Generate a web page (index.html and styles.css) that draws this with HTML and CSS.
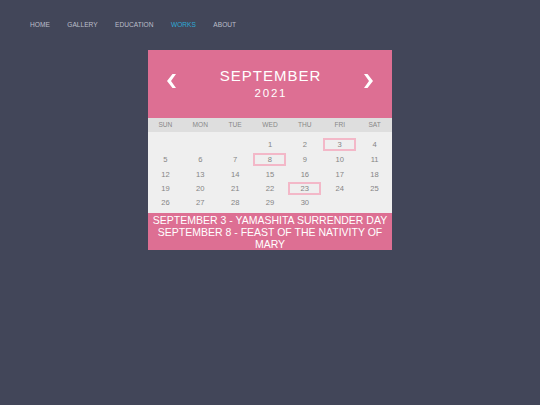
FILE: index.html
```html
<!DOCTYPE html>
<html>
<head>
<meta charset="utf-8">
<link rel="stylesheet" href="styles.css">
</head>
<body>
<nav class="nav">
  <a class="nav-link">HOME</a>
  <a class="nav-link">GALLERY</a>
  <a class="nav-link">EDUCATION</a>
  <a class="nav-link active">WORKS</a>
  <a class="nav-link">ABOUT</a>
</nav>
<div class="calendar">
  <div class="cal-head">
    <svg class="arrow" width="9" height="14" viewBox="0 0 9 14"><polygon points="5.5,0 9,0 4,7 9,14 5.5,14 0,7" fill="#fff"/></svg>
    <div class="title">
      <div class="month">SEPTEMBER</div>
      <div class="year">2021</div>
    </div>
    <svg class="arrow" width="9" height="14" viewBox="0 0 9 14"><polygon points="3.5,0 0,0 5,7 0,14 3.5,14 9,7" fill="#fff"/></svg>
  </div>
  <div class="weekdays">
    <span>SUN</span><span>MON</span><span>TUE</span><span>WED</span><span>THU</span><span>FRI</span><span>SAT</span>
  </div>
  <div class="days">
    <span></span><span></span><span></span><span>1</span><span>2</span><span class="event">3</span><span>4</span>
    <span>5</span><span>6</span><span>7</span><span class="event">8</span><span>9</span><span>10</span><span>11</span>
    <span>12</span><span>13</span><span>14</span><span>15</span><span>16</span><span>17</span><span>18</span>
    <span>19</span><span>20</span><span>21</span><span>22</span><span class="event">23</span><span>24</span><span>25</span>
    <span>26</span><span>27</span><span>28</span><span>29</span><span>30</span><span></span><span></span>
  </div>
  <div class="events">
    <div>SEPTEMBER 3 - YAMASHITA SURRENDER DAY</div>
    <div>SEPTEMBER 8 - FEAST OF THE NATIVITY OF MARY</div>
  </div>
</div>
</body>
</html>
```
FILE: styles.css
```css
html, body {
  margin: 0;
  padding: 0;
  background: #424659;
  font-family: "Liberation Sans", Arial, sans-serif;
}
body {
  width: 540px;
  height: 405px;
}
.nav {
  display: flex;
  gap: 17.5px;
  padding: 21px 0 0 30px;
  height: 30px;
  box-sizing: border-box;
}
.nav-link {
  font-size: 6.6px;
  line-height: 8px;
  color: #bcbfca;
}
.nav-link.active {
  color: #2eaad6;
}
.calendar {
  width: 244px;
  margin: 20px auto 0;
}
.cal-head {
  background: #dd6f93;
  height: 68px;
  display: flex;
  align-items: center;
  justify-content: space-between;
  padding: 0 19px;
}
.arrow {
  margin-bottom: 6px;
}
.title {
  color: #fff;
  text-align: center;
}
.month {
  font-size: 15px;
  line-height: 16px;
  letter-spacing: 1px;
  margin-left: 1px;
}
.year {
  font-size: 11.5px;
  line-height: 16px;
  letter-spacing: 1.8px;
  margin-left: 1.8px;
  padding-top: 1px;
}
.weekdays {
  background: #dedede;
  display: grid;
  grid-template-columns: repeat(7, 1fr);
  height: 14px;
  line-height: 14px;
  font-size: 6.6px;
  color: #888;
  text-align: center;
}
.days {
  background: #efefef;
  display: grid;
  grid-template-columns: repeat(7, 1fr);
  grid-template-rows: 14px 16px 14px 14px 14px;
  padding: 5px 0 4px;
  font-size: 7.6px;
  color: #858585;
  text-align: center;
}
.days span {
  display: flex;
  align-items: center;
  justify-content: center;
}
.days .event {
  justify-self: center;
  align-self: center;
  width: 33px;
  height: 13px;
  box-sizing: border-box;
  border: 2px solid #f3b8c8;
}
.events {
  background: #dd6f93;
  color: #fff;
  font-size: 10.5px;
  line-height: 12px;
  text-align: center;
  padding: 1px 4px 0;
}
```
